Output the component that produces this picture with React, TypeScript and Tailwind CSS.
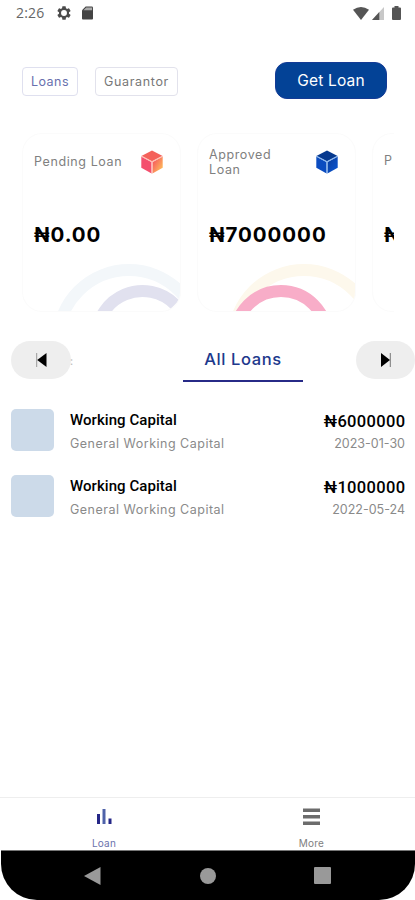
import { useState } from 'react'
import { clsx } from 'clsx'

const LOANS = [
  { id: 1, title: 'Working Capital', type: 'General Working Capital', amount: '₦6000000', date: '2023-01-30' },
  { id: 2, title: 'Working Capital', type: 'General Working Capital', amount: '₦1000000', date: '2022-05-24' },
]

function StatusBar() {
  return (
    <div className="flex h-[26px] items-center justify-between pl-4 pr-[14px]">
      <div className="flex items-center">
        <span className="w-[41px] font-['Open_Sans',sans-serif] text-[14px] leading-none tracking-[0.2px] text-[#666]">2:26</span>
        <svg className="h-[14px] w-[14px]" viewBox="2 2 20 20" fill="#4b4b4b">
          <path d="M19.14 12.94c.04-.3.06-.61.06-.94s-.02-.64-.07-.94l2.03-1.58a.49.49 0 0 0 .12-.61l-1.92-3.32a.49.49 0 0 0-.59-.22l-2.39.96a7 7 0 0 0-1.62-.94L14.4 2.81a.48.48 0 0 0-.48-.41h-3.84a.47.47 0 0 0-.47.41l-.36 2.54a7.4 7.4 0 0 0-1.62.94l-2.39-.96a.48.48 0 0 0-.59.22L2.74 8.87a.47.47 0 0 0 .12.61l2.03 1.58a6 6 0 0 0 0 1.88l-2.03 1.58a.49.49 0 0 0-.12.61l1.92 3.32c.12.22.37.29.59.22l2.39-.96c.5.38 1.03.7 1.62.94l.36 2.54c.05.24.24.41.48.41h3.84c.24 0 .44-.17.47-.41l.36-2.54a7 7 0 0 0 1.62-.94l2.39.96c.22.08.47 0 .59-.22l1.92-3.32a.47.47 0 0 0-.12-.61zM12 16.2a4.2 4.2 0 1 1 0-8.4 4.2 4.2 0 0 1 0 8.4" />
        </svg>
        <svg className="ml-[11px] h-[14px] w-[11px]" viewBox="0 0 12 14">
          <path d="M4 0h6.5Q12 0 12 1.5V13q0 1-1 1H1q-1 0-1-1V4z" fill="#444" />
          <path d="M4.6.9H11v3H1.6z" fill="#aaa" />
        </svg>
      </div>
      <div className="flex items-center">
        <svg className="h-[13px] w-[16px]" viewBox="0 0 16 13">
          <path d="M0 2.8Q8-2.8 16 2.8L8 13z" fill="#555" />
        </svg>
        <svg className="ml-[3px] h-[13px] w-[12px]" viewBox="0 0 12 13">
          <path d="M12 0v13H0z" fill="#c8c8c8" />
          <path d="M7.3 5.1V13H0z" fill="#555" />
        </svg>
        <svg className="ml-[8px] h-[14px] w-[9px]" viewBox="0 0 9 14">
          <path d="M2.5 0h4v1.5H8q1 0 1 1V13q0 1-1 1H1q-1 0-1-1V2.5q0-1 1-1h1.5z" fill="#555" />
        </svg>
      </div>
    </div>
  )
}

function Cube({ tone }: { tone: 'warm' | 'blue' }) {
  const warm = tone === 'warm'
  return (
    <svg className="h-[24px] w-[22px] shrink-0" viewBox="0 0 22 24">
      <defs>
        <linearGradient id={`cube-${tone}`} x1="0" y1="0" x2="1" y2="1">
          <stop offset="0.1" stopColor={warm ? '#f5515f' : '#0a3fa0'} />
          <stop offset="0.9" stopColor={warm ? '#ffc45a' : '#0a55d0'} />
        </linearGradient>
      </defs>
      <path d="M11 .5 21.6 6 11 11.4.4 6z" fill={warm ? '#f4615a' : '#06398f'} />
      <path d="M.3 6.6 10.6 12v11.6L.3 17.8z" fill={warm ? '#f4506e' : '#0b4cc0'} />
      <path d="M21.7 6.6 11.4 12v11.6l10.3-5.8z" fill={`url(#cube-${tone})`} />
      <path d="M.6 6.3 11 11.7l10.4-5.4M11 11.7v11.5" fill="none" stroke={warm ? '#ffc0b5' : '#8db8ef'} strokeWidth="1.2" />
    </svg>
  )
}

function PendingArcs() {
  return (
    <svg className="absolute bottom-0 left-0 h-[48px] w-[159px]" viewBox="0 0 159 48" fill="none" strokeWidth="12">
      <circle cx="106" cy="78" r="71" stroke="#f3f7fa" />
      <path d="M73.500 74a46 46 0 0 1 78.500-32.500" stroke="#e1e1ef" />
    </svg>
  )
}

function ApprovedArcs() {
  return (
    <svg className="absolute bottom-0 left-0 h-[48px] w-[159px]" viewBox="0 0 159 48" fill="none" strokeWidth="12">
      <circle cx="106" cy="78" r="71" stroke="#fdf8ec" />
      <circle cx="83" cy="74" r="46" stroke="#f8adc8" />
    </svg>
  )
}

function LoanCard({ label, amount, tone }: { label: string; amount: string; tone: 'warm' | 'blue' }) {
  return (
    <div className="relative h-[179px] w-[159px] shrink-0 overflow-hidden rounded-[20px] border border-[#fbfbfb] bg-white">
      <div className="flex h-[55px] items-center justify-between pl-[11px] pr-[17px]">
        <span className="w-[94px] font-['Inter',sans-serif] text-[12.5px] leading-[15px] tracking-[0.6px] text-[#808080]">{label}</span>
        <Cube tone={tone} />
      </div>
      <p className="mt-[32px] whitespace-nowrap pl-[11px] font-['Inter',sans-serif] text-[20.5px] font-bold leading-[28px] tracking-[0.95px] text-black">
        {amount}
      </p>
      {tone === 'warm' ? <PendingArcs /> : <ApprovedArcs />}
    </div>
  )
}

export default function App() {
  const [tab, setTab] = useState('loan')

  return (
    <div className="flex h-[900px] w-[415px] flex-col overflow-hidden bg-white font-['Inter',sans-serif]">
      <StatusBar />

      {/* Header actions */}
      <div className="mt-[36px] flex h-[37px] items-center pl-[22px] pr-[28px]">
        <button className="mt-[2px] h-[29px] w-[56px] rounded-[4px] border border-[#dfe0ef] pt-[2px] text-[12.5px] tracking-[0.5px] text-[#6870ae]">Loans</button>
        <button className="ml-[17px] mt-[2px] h-[29px] w-[83px] rounded-[4px] border border-[#e2e2ec] pt-[2px] text-[12.5px] tracking-[0.65px] text-[#777]">Guarantor</button>
        <button className="ml-auto h-[37px] w-[112px] rounded-[12px] border border-[#143b96] bg-[#034296] text-[15.5px] tracking-[0.2px] text-white">Get Loan</button>
      </div>

      {/* Loan summary */}
      <div className="ml-[22px] mt-[34px] flex w-[372px] gap-[16px] overflow-hidden">
        <LoanCard label="Pending Loan" amount="₦0.00" tone="warm" />
        <LoanCard label="Approved Loan" amount="₦7000000" tone="blue" />
        <div className="h-[179px] w-[159px] shrink-0 rounded-[20px] border border-[#fbfbfb] pl-[11px]">
          <div className="flex h-[55px] items-center text-[12.5px] text-[#808080]">P</div>
          <p className="mt-[32px] text-[20.5px] font-bold leading-[28px] text-black">₦</p>
        </div>
      </div>

      {/* Tab strip */}
      <div className="mt-[29px] flex h-[41px] pl-[11px]">
        <button className="flex h-[38px] w-[60px] items-center justify-center rounded-[19px] bg-[#eee]">
          <svg className="h-[14px] w-[11px]" viewBox="0 0 11 14">
            <path d="M.7 0v14" stroke="#999" />
            <path d="M10.500 0v14L1.200 7z" fill="#000" />
          </svg>
        </button>
        <span className="ml-[-1px] mt-[12px] w-[4px] text-[11px] text-[#bbb]">:</span>
        <div className="ml-[109px] flex w-[120px] flex-col items-center border-b-2 border-[#272a87] pt-[6px]">
          <span className="whitespace-nowrap text-[16.5px] font-medium leading-[24px] tracking-[0.6px] text-[#20388c]">All Loans</span>
        </div>
        <button className="ml-[53px] flex h-[38px] w-[59px] items-center justify-center rounded-[19px] bg-[#eee]">
          <svg className="h-[14px] w-[10px]" viewBox="0 0 10 14">
            <path d="M9.300 0v14" stroke="#777" />
            <path d="M0 0v14l9-7z" fill="#000" />
          </svg>
        </button>
      </div>

      {/* Loan list */}
      <div className="mt-[27px] flex flex-1 flex-col gap-[23px] pl-[11px] pr-[10px]">
        {LOANS.map(loan => (
          <div key={loan.id} className="flex h-[43px]">
            <div className="h-[42px] w-[43px] rounded-[5px] bg-[#ccdae9]" />
            <div className="ml-[16px] flex-1">
              <p className="font-['Roboto',sans-serif] text-[15px] font-medium leading-[22px] tracking-[0.05px] text-black">{loan.title}</p>
              <p className="text-[12.5px] leading-[26px] tracking-[0.5px] text-[#8a8a8a]">{loan.type}</p>
            </div>
            <div className="text-right">
              <p className="mr-[-0.5px] font-['Roboto',sans-serif] text-[16.5px] font-medium leading-[25px] tracking-[0.35px] text-black">{loan.amount}</p>
              <p className="text-[12.5px] leading-[19px] text-[#8a8a8a]">{loan.date}</p>
            </div>
          </div>
        ))}
      </div>

      {/* Bottom tabs */}
      <div className="flex h-[53px] border-t border-[#eee]">
        <button onClick={() => setTab('loan')} className="flex w-[208px] flex-col items-center">
          <svg className="mt-[11px] h-[16px] w-[16px] shrink-0" viewBox="0 0 16 16">
            <path d="M1 5h3v10H1z" fill="#252787" />
            <path d="M6.500 0h3v15h-3z" fill="#4f62a9" />
            <path d="M12.500 9.500h3V15h-3z" fill="#252787" />
          </svg>
          <span className={clsx('mt-[11px] text-[10px] leading-[14px] tracking-[0.2px]', tab === 'loan' ? 'text-[#6a72ad]' : 'text-[#808080]')}>Loan</span>
        </button>
        <button onClick={() => setTab('more')} className="flex w-[207px] flex-col items-center">
          <svg className="mt-[10px] h-[17px] w-[17px] shrink-0" viewBox="0 0 17 17" fill="#6c6c6c">
            <path d="M0 .5h17v3.500H0zM0 7h17v3.500H0zM0 13.500h17V17H0z" />
          </svg>
          <span className={clsx('mt-[11px] text-[10px] leading-[14px] tracking-[0.2px]', tab === 'more' ? 'text-[#6a72ad]' : 'text-[#808080]')}>More</span>
        </button>
      </div>

      {/* System navigation */}
      <div className="ml-[1px] flex h-[50px] items-center rounded-b-[36px] border-t border-[#777] bg-black pl-[83px]">
        <svg className="h-[18px] w-[17px]" viewBox="0 0 17 18">
          <path d="M16.500 0v18L0 9z" fill="#999" />
        </svg>
        <div className="ml-[99px] h-[16px] w-[16px] rounded-full bg-[#999]" />
        <div className="ml-[98px] h-[17px] w-[17px] rounded-[1px] bg-[#999]" />
      </div>
    </div>
  )
}
